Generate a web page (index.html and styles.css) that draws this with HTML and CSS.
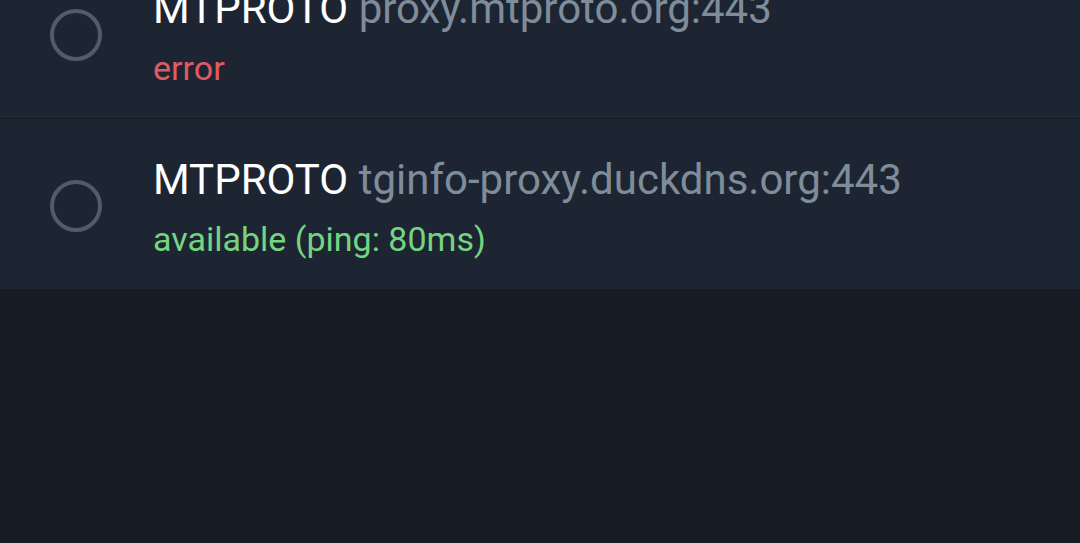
FILE: index.html
```html
<!DOCTYPE html>
<html>
<head>
<meta charset="utf-8">
<link rel="stylesheet" href="styles.css">
</head>
<body>
<div class="list">
  <div class="row">
    <div class="radio"></div>
    <div class="info">
      <div class="title">MTPROTO <span class="addr">proxy.mtproto.org:443</span></div>
      <div class="status error">error</div>
    </div>
  </div>
  <div class="row">
    <div class="radio"></div>
    <div class="info">
      <div class="title">MTPROTO <span class="addr">tginfo-proxy.duckdns.org:443</span></div>
      <div class="status ok">available (ping: 80ms)</div>
    </div>
  </div>
</div>
</body>
</html>
```
FILE: styles.css
```css
html, body {
  margin: 0;
  padding: 0;
  background: #171c24;
  height: 100%;
  overflow: hidden;
}
body {
  font-family: Roboto, "Noto Sans", sans-serif;
}
.list {
  margin-top: -52px;
  display: flex;
  flex-direction: column;
  gap: 1px;
  background: #141a22;
}
.row {
  height: 170px;
  background: #1e2532;
  display: flex;
  align-items: center;
  box-sizing: border-box;
}
.radio {
  width: 44px;
  height: 44px;
  border: 4px solid #4f5c69;
  border-radius: 50%;
  margin-left: 50px;
  margin-right: 51px;
  margin-top: 4px;
  flex: none;
}
.info {
  display: flex;
  flex-direction: column;
  padding-top: 10px;
}
.title {
  font-size: 42px;
  color: #ffffff;
  line-height: 54px;
}
.addr {
  color: #7f8d9a;
}
.status {
  font-size: 34px;
  line-height: 54px;
  margin-top: 5px;
}
.error { color: #e05a63; }
.ok { color: #74d581; }
```
